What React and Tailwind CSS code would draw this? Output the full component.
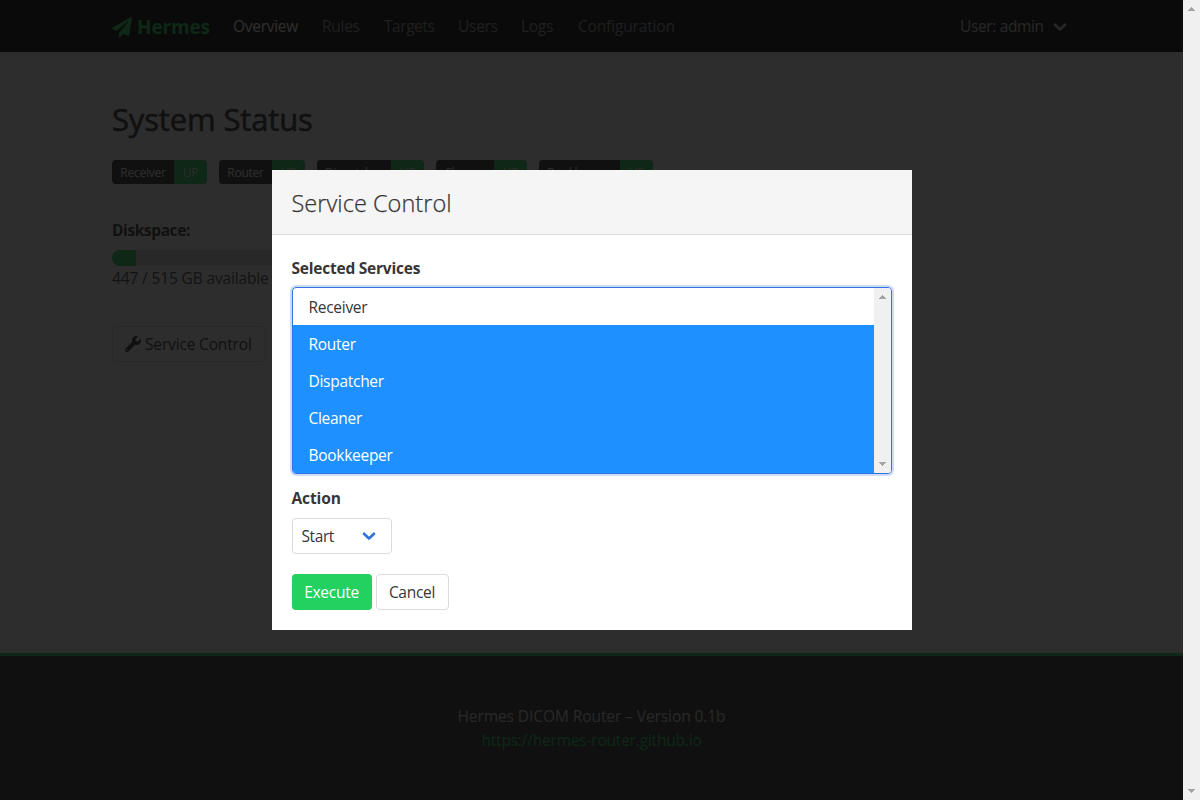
import { FaPaperPlane, FaWrench } from "react-icons/fa";

const services = [
  { name: "Receiver", badge: "w-[62px]" },
  { name: "Router", badge: "w-[53px]" },
  { name: "Dispatcher", badge: "w-[74px]" },
  { name: "Cleaner", badge: "w-[58px]" },
  { name: "Bookkeeper", badge: "w-[81px]" },
];

const links = [
  { name: "Overview", style: "w-[89px] text-white" },
  { name: "Rules", style: "w-[62px] text-[#999999]" },
  { name: "Targets", style: "w-[74px] tracking-[-0.45px] text-[#999999]" },
  { name: "Users", style: "w-[63px] text-[#999999]" },
  { name: "Logs", style: "w-[57px] text-[#999999]" },
  { name: "Configuration", style: "w-[122px] tracking-[-0.16px] text-[#999999]" },
];

function Chevron({ className }) {
  return (
    <svg className={className} width="14" height="10" viewBox="0 0 14 10" fill="none" stroke="currentColor" strokeWidth="2.7" strokeLinecap="round" strokeLinejoin="round">
      <path d="M2 2.7 L7 7.5 L12 2.7" />
    </svg>
  );
}

function Arrow({ down }) {
  return (
    <svg width="7" height="4" viewBox="0 0 7 4" fill="#a3a3a3" shapeRendering="crispEdges">
      {down ? <path d="M0 0H7V1H6V2H5V3H4V4H3V3H2V2H1V1H0Z" /> : <path d="M3 0H4V1H5V2H6V3H7V4H0V3H1V2H2V1H3Z" />}
    </svg>
  );
}

function Navbar() {
  return (
    <header className="flex h-[52px] items-center bg-[#0a0a0a] pl-[112px] pr-[116px] pt-[2px]">
      <FaPaperPlane className="size-5 text-[#23d160]" />
      <span className="ml-[5px] w-[84px] text-[19px] font-bold tracking-[-0.15px] text-[#23d160]">Hermes</span>
      <nav className="ml-[12px] flex">
        {links.map((l) => (
          <a key={l.name} className={"whitespace-nowrap " + l.style}>{l.name}</a>
        ))}
      </nav>
      <div className="ml-auto flex items-center text-[#d0d0d0]">
        <span className="w-[93px] whitespace-nowrap tracking-[-0.36px]">User: admin</span>
        <Chevron />
      </div>
    </header>
  );
}

function Status() {
  return (
    <main className="h-[601px] bg-white pl-[112px] pt-[47px] text-[#363636]">
      <h1 className="h-[41px] whitespace-nowrap text-[31px] leading-10 tracking-[-0.15px] [-webkit-text-stroke:0.6px]">System Status</h1>
      <div className="mt-[20px] flex gap-3 text-[12px] tracking-[-0.25px]">
        {services.map((s) => (
          <div key={s.name} className="flex h-6 overflow-hidden rounded text-white">
            <span className={"flex items-center justify-center bg-[#363636] pt-[2px] " + s.badge}>{s.name}</span>
            <span className="flex w-[33px] items-center justify-center bg-[#23d160] pt-[2px]">UP</span>
          </div>
        ))}
      </div>
      <p className="mt-[34px] h-6 font-bold leading-[25px] tracking-[-0.4px]">Diskspace:</p>
      <div className="mt-[8px] h-4 w-[200px] overflow-hidden rounded-full bg-[#dbdbdb]">
        <div className="h-full w-6 bg-[#23d160]" />
      </div>
      <p className="h-6 leading-[25px] tracking-[-0.14px] text-[#4a4a4a]">447 / 515 GB available</p>
      <button className="mt-[36px] flex h-9 w-[154px] items-center rounded border border-[#dbdbdb] pl-[12px] text-[#363636]">
        <FaWrench className="size-4" />
        <span className="ml-[4px] whitespace-nowrap pt-[2px] tracking-[-0.16px]">Service Control</span>
      </button>
    </main>
  );
}

function Modal() {
  return (
    <section className="flex h-[460px] w-[640px] flex-col bg-white text-[#363636]">
      <header className="flex h-[65px] items-center border-b border-[#dbdbdb] bg-[#f5f5f5] px-5 pt-[4px]">
        <h2 className="whitespace-nowrap text-[23.5px] font-light tracking-[0.04px] [-webkit-text-stroke:0.25px]">Service Control</h2>
      </header>
      <div className="flex flex-col items-start px-5 pt-5">
        <p className="h-6 font-bold leading-[26px] tracking-[-0.22px]">Selected Services</p>
        <div className="mt-[8px] flex h-[187px] w-[600px] overflow-hidden rounded border border-[#3273dc] shadow-[0_0_0_2px_rgba(50,115,220,0.25)]">
          <ul className="grow">
            {services.map((s, i) => (
              <li key={s.name} className={i ? "h-[37px] bg-[#1e90ff] pl-4 leading-[39px] text-white" : "h-[37px] pl-4 leading-[39px]"}>{s.name}</li>
            ))}
          </ul>
          <div className="flex w-[17px] flex-col items-center justify-between bg-[#f0f0f0] py-[7px]">
            <Arrow />
            <Arrow down />
          </div>
        </div>
        <p className="mt-[12px] h-6 font-bold leading-[25px] tracking-[-0.1px]">Action</p>
        <div className="mt-[8px] flex h-9 w-[100px] items-center justify-between rounded border border-[#dbdbdb] pl-[9px] pr-[15px]">
          <span className="pt-[2px] tracking-[-0.4px]">Start</span>
          <Chevron className="text-[#3273dc]" />
        </div>
        <div className="mt-5 flex gap-1">
          <button className="h-9 w-20 rounded bg-[#23d160] pt-[2px] text-white">Execute</button>
          <button className="h-9 w-[73px] rounded border border-[#dbdbdb] bg-white pt-[2px]">Cancel</button>
        </div>
      </div>
    </section>
  );
}

export default function App() {
  return (
    <div className="relative flex h-[800px] w-[1200px] overflow-hidden font-['Open_Sans',sans-serif] text-[15.5px] tracking-[-0.28px]">
      <div className="w-[1183px]">
        <Navbar />
        <Status />
        <footer className="h-[147px] border-t-[3px] border-[#23d160] bg-[#363636] pt-[48px] text-center leading-[24px] text-[#dbdbdb]">
          <p className="tracking-[-0.08px]">Hermes DICOM Router – Version 0.1b</p>
          <p className="tracking-[-0.2px] text-[#23d160]">https://hermes-router.github.io</p>
        </footer>
      </div>
      <div className="flex w-[17px] flex-col items-center justify-between bg-[#f0f0f0] py-[7px]">
        <Arrow />
        <Arrow down />
      </div>
      <div className="absolute left-0 top-0 flex h-[800px] w-[1183px] items-center justify-center bg-[#0a0a0a]/86">
        <Modal />
      </div>
    </div>
  );
}
